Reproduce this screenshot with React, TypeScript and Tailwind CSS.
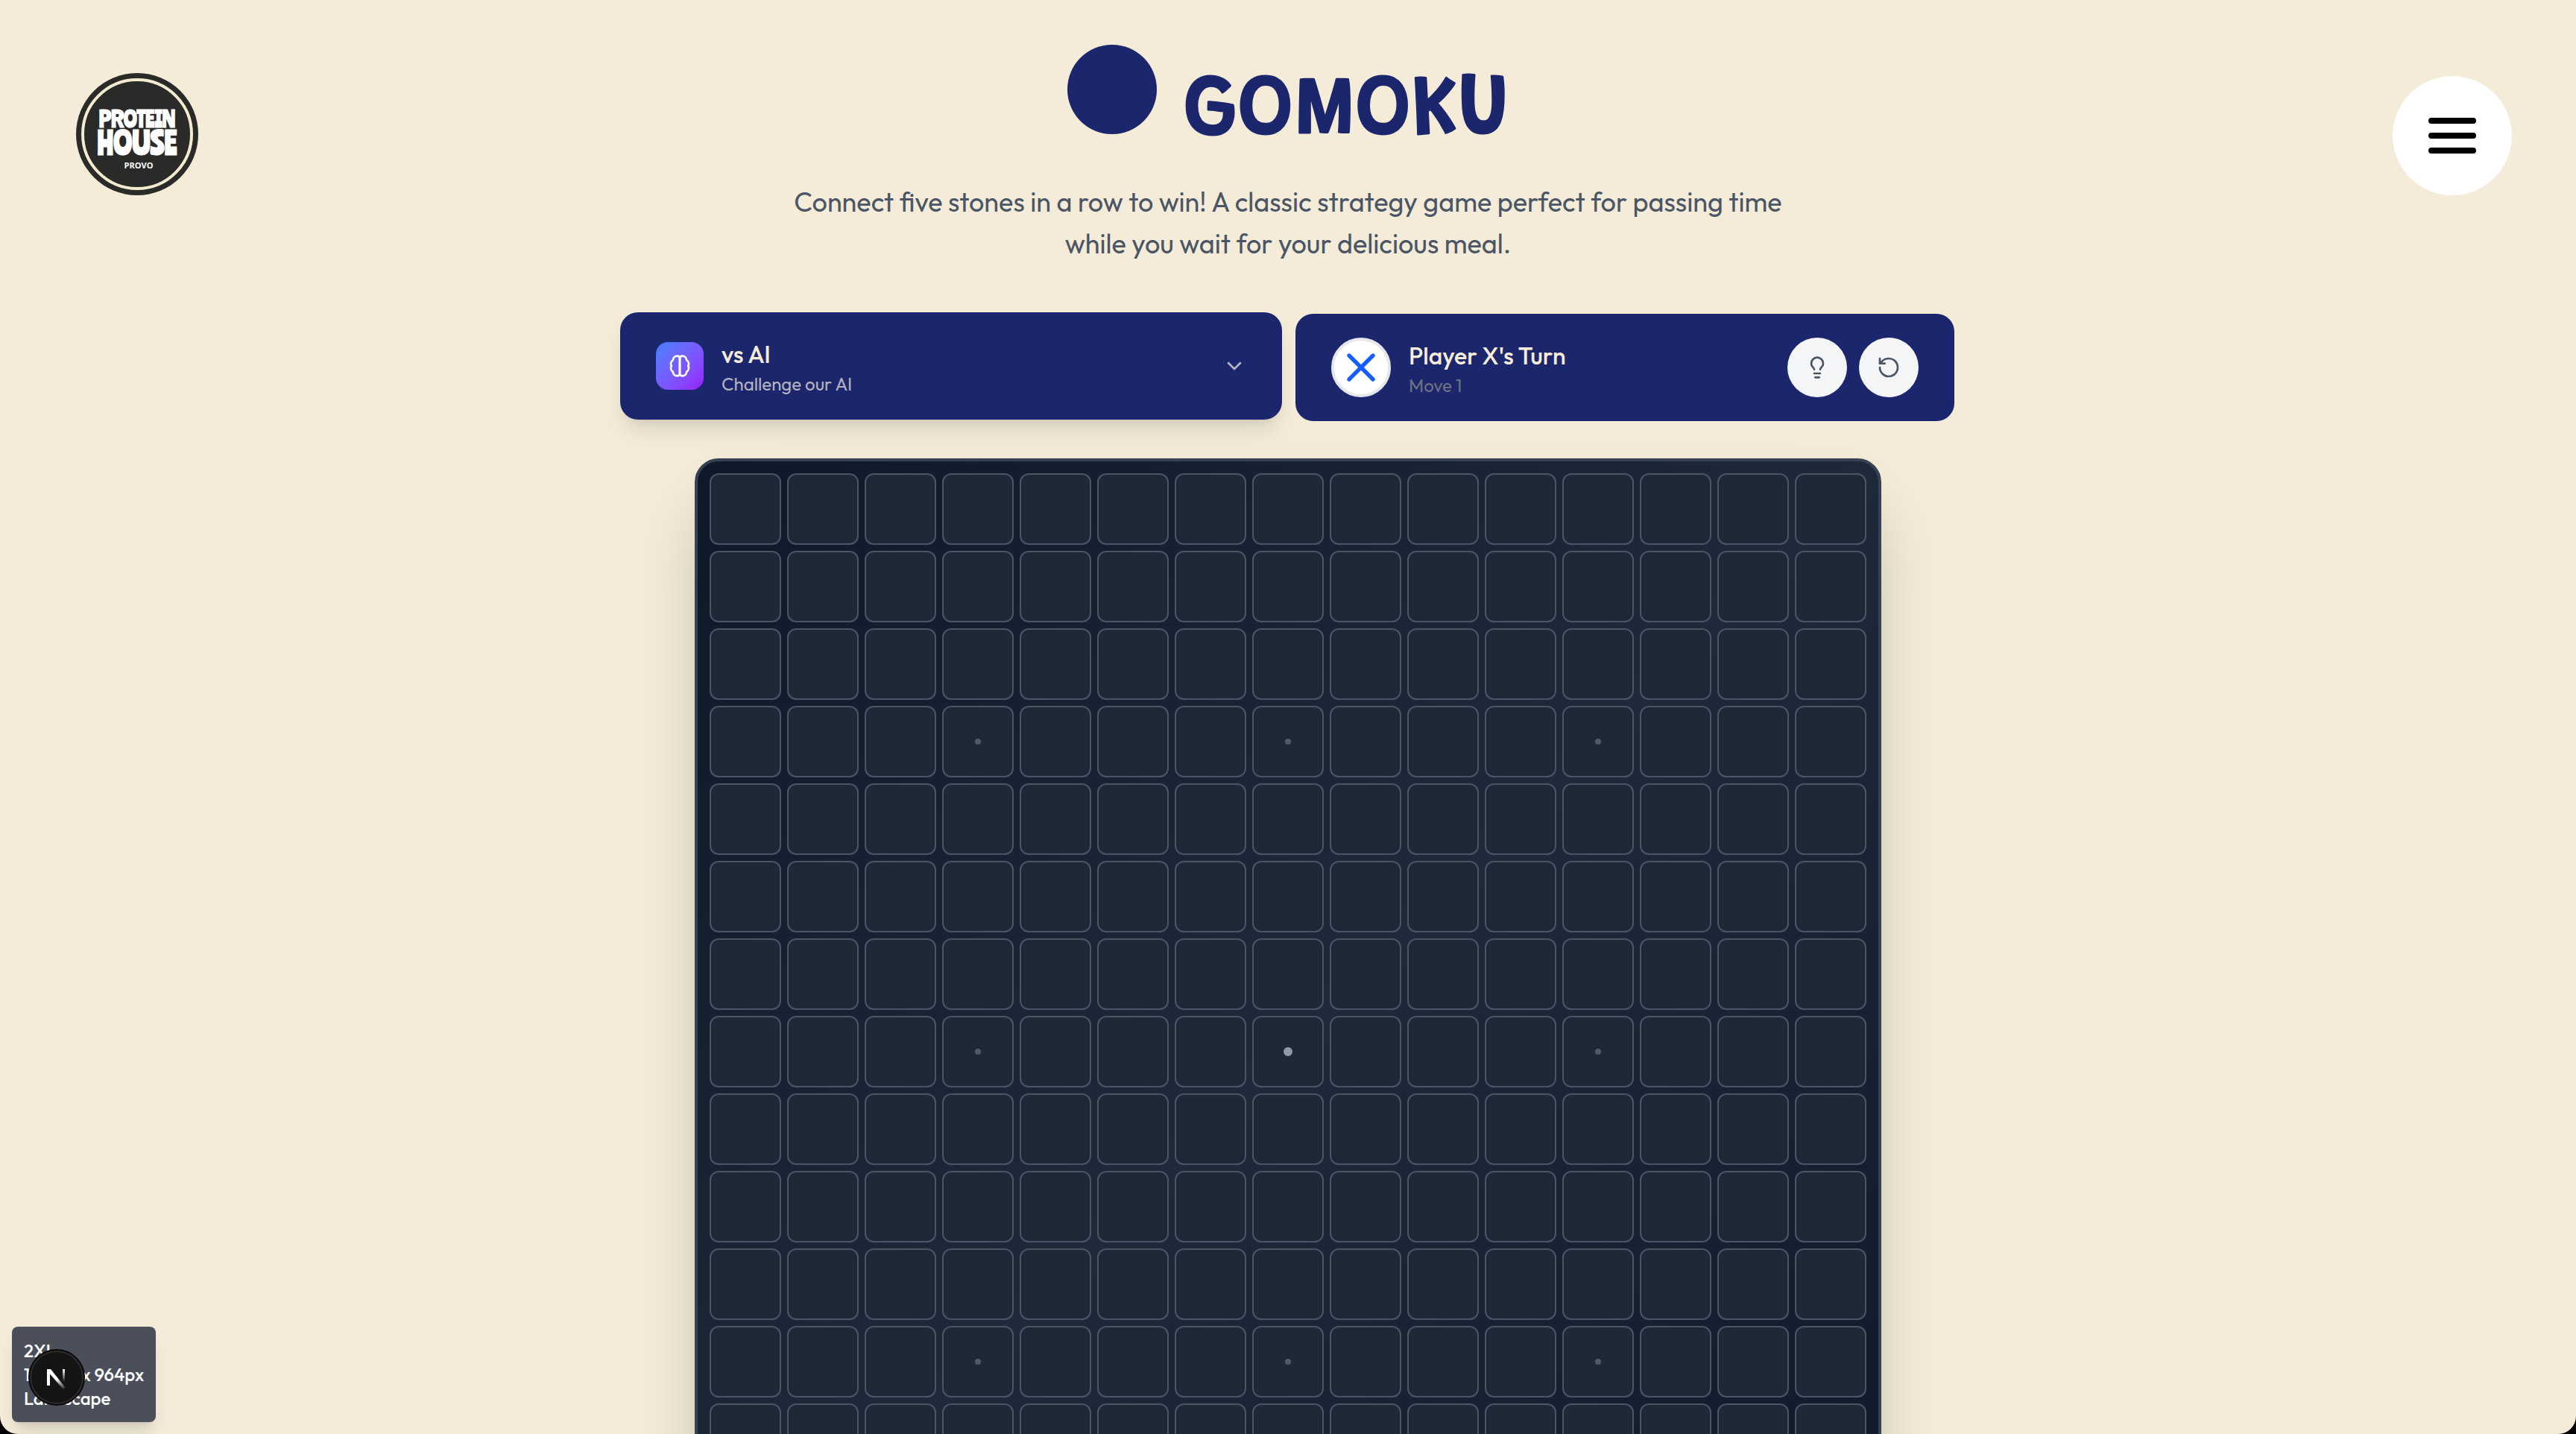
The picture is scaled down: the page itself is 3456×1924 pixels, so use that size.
import React from "react";
import { ChevronDown, Lightbulb, RotateCcw, X } from "lucide-react";

const SIZE = 15;
const STARS = [3, 7, 11];

function ProteinHouseLogo() {
  return (
    <svg viewBox="0 0 164 164" className="size-[164px]" role="img" aria-label="Protein House Provo">
      <circle cx="82" cy="82" r="82" fill="#2a2a29" />
      <circle cx="82" cy="82" r="73" fill="none" stroke="#f3ebd0" strokeWidth="4" />
      <g
        fill="#fff"
        stroke="#fff"
        strokeWidth="1"
        textAnchor="middle"
        fontFamily="'Ranchers', 'DejaVu Sans Condensed', sans-serif"
      >
        <text x="82" y="73" fontSize="29">PROTEIN</text>
        <text x="82" y="110" fontSize="41">HOUSE</text>
      </g>
      <text x="84" y="128" fontSize="11" fontWeight="700" fill="#fff" textAnchor="middle" fontFamily="'Open Sans', sans-serif">
        PROVO
      </text>
    </svg>
  );
}

function BrainIcon() {
  const half = "M12 4.5C12 3 11 2 9.5 2C7 2 5.200 3.700 5.200 6C3 7.500 2.400 10 3.600 12C2.400 14 3 16.500 5.200 18C5.200 20.300 7 22 9.500 22C11 22 12 21 12 19.500Z";
  return (
    <svg viewBox="0 0 24 24" fill="none" stroke="currentColor" strokeWidth="2" strokeLinecap="round" strokeLinejoin="round" className="size-8" aria-hidden="true">
      <path d={half} />
      <path d={half} transform="matrix(-1 0 0 1 24 0)" />
    </svg>
  );
}

function Title() {
  return (
    <h1 className="flex items-center justify-center gap-8">
      <span className="size-[120px] rounded-full bg-[#1c266c]" />
      <svg viewBox="0 0 440 120" className="h-[120px] w-[440px] overflow-visible" role="img" aria-label="Gomoku">
        <text
          x="4"
          y="118"
          fontSize="113"
          fontWeight="500"
          fontFamily="'Grandstander', 'DejaVu Sans Condensed', sans-serif"
          fill="#1c266c"
          stroke="#1c266c"
          strokeWidth="3"
          strokeLinejoin="round"
        >
          GOMOKU
        </text>
      </svg>
    </h1>
  );
}

function ModeSelector() {
  return (
    <button
      type="button"
      aria-haspopup="listbox"
      className="flex h-36 items-center gap-6 rounded-3xl bg-[#1c266c] px-12 text-left shadow-[0_20px_30px_-6px_rgb(0_0_0/0.1),0_8px_12px_-8px_rgb(0_0_0/0.1)]"
    >
      <span className="flex size-16 items-center justify-center rounded-2xl bg-linear-to-br from-[#3f80ff] to-[#9518fb] text-white">
        <BrainIcon />
      </span>
      <span className="flex flex-1 flex-col">
        <span className="text-[32px] leading-12 font-medium text-[#f5ecd9]">vs AI</span>
        <span className="text-2xl leading-8 text-[#b2b3bf]">Challenge our AI</span>
      </span>
      <ChevronDown className="size-8 text-[#b2b3bf]" aria-hidden="true" />
    </button>
  );
}

function TurnPanel() {
  return (
    <section className="p-[2px]">
      <div className="flex h-36 items-center gap-6 rounded-3xl bg-[#1c266c] px-12">
        <span className="flex size-20 items-center justify-center rounded-full border-4 border-gray-200 bg-white text-[#155dfc]">
          <X className="size-16 shrink-0" aria-hidden="true" />
        </span>
        <div className="flex-1">
          <h2 className="text-[32px] leading-12 font-medium text-[#f5ecd9]">Player X's Turn</h2>
          <p className="text-2xl leading-8 text-[#6a7282]">Move 1</p>
        </div>
        <div className="flex gap-4 text-[#4a5565]">
          <button type="button" aria-label="Hint" className="flex size-20 items-center justify-center rounded-full bg-[#f3f5f7]">
            <Lightbulb className="size-8" />
          </button>
          <button type="button" aria-label="Restart" className="flex size-20 items-center justify-center rounded-full bg-[#f3f5f7]">
            <RotateCcw className="size-8" />
          </button>
        </div>
      </div>
    </section>
  );
}

function Board() {
  const cells = Array.from({ length: SIZE * SIZE }, (_, i) => ({ row: Math.floor(i / SIZE), col: i % SIZE }));
  return (
    <div className="mx-auto mt-12 grid w-full max-w-[1592px] grid-cols-[repeat(15,minmax(0,1fr))] gap-2 rounded-4xl border-4 border-[#364153] bg-linear-to-br from-[#0f1828] via-[#1e2939] to-[#0f1828] bg-origin-border p-4 shadow-[0_50px_100px_-24px_rgb(0_0_0/0.25)]">
      {cells.map(({ row, col }) => {
        const star = STARS.includes(row) && STARS.includes(col);
        const center = row === 7 && col === 7;
        return (
          <button
            key={`${row}-${col}`}
            type="button"
            aria-label={`Row ${row + 1}, column ${col + 1}`}
            className="flex aspect-square items-center justify-center rounded-xl border-2 border-[#4a5565] bg-[#1e2938]"
          >
            {center ? (
              <span className="size-3 rounded-full bg-[#8f99a8]" />
            ) : star ? (
              <span className="size-2 rounded-full bg-[#4f5a69]" />
            ) : null}
          </button>
        );
      })}
    </div>
  );
}

function NextBadge() {
  return (
    <button
      type="button"
      aria-label="Open Next.js Dev Tools"
      className="absolute bottom-[38px] left-[38px] flex size-[76px] items-center justify-center rounded-full border-2 border-[#0a0a0a] bg-[#141414] inset-ring-2 inset-ring-[#2e2e2e]"
    >
      <svg viewBox="0 0 76 76" className="size-[76px] shrink-0" fill="none" aria-hidden="true">
        <defs>
          <linearGradient id="stem" x1="0" y1="27" x2="0" y2="44" gradientUnits="userSpaceOnUse">
            <stop stopColor="#fff" />
            <stop offset="1" stopColor="#fff" stopOpacity="0" />
          </linearGradient>
          <linearGradient id="diagonal" x1="38" y1="40" x2="50" y2="54" gradientUnits="userSpaceOnUse">
            <stop stopColor="#fff" />
            <stop offset="1" stopColor="#fff" stopOpacity="0" />
          </linearGradient>
        </defs>
        <path d="M25 27h4v22h-4z" fill="#fff" />
        <path d="M25 27h5L50 52l-3 2L25 29z" fill="url(#diagonal)" />
        <path d="M46 27h3v18h-3z" fill="url(#stem)" />
      </svg>
    </button>
  );
}

export default function App() {
  return (
    <div className="h-screen bg-black font-['Outfit','Lato',sans-serif]">
      <div className="relative h-full overflow-hidden rounded-b-3xl bg-[#f4ebd8]">
        <nav className="absolute inset-x-0 top-[98px] flex items-center justify-between pr-[86px] pl-[102px]">
          <a href="#home">
            <ProteinHouseLogo />
          </a>
          <button type="button" aria-label="Open menu" className="mt-1 flex size-40 flex-col items-center justify-center gap-3 rounded-full bg-white">
            <span className="h-2 w-16 rounded-full bg-black" />
            <span className="h-2 w-16 rounded-full bg-black" />
            <span className="h-2 w-16 rounded-full bg-black" />
          </button>
        </nav>
        <main className="h-full overflow-y-auto pt-[60px] pb-16 [scrollbar-width:none]">
          <Title />
          <p className="mx-auto mt-[63px] max-w-[1344px] text-center text-4xl leading-14 text-[#4a5565]">
            Connect five stones in a row to win! A classic strategy game perfect for passing time while you wait for your
            delicious meal.
          </p>
          <div className="mx-auto mt-16 grid max-w-[1792px] grid-cols-2 items-start gap-4">
            <ModeSelector />
            <TurnPanel />
          </div>
          <Board />
        </main>
        <aside className="absolute bottom-4 left-4 rounded-lg bg-[#4b4f5a] p-4 text-2xl leading-8 font-medium text-white shadow-xl">
          <p>2XL</p>
          <p>1728px x 964px</p>
          <p>Landscape</p>
        </aside>
        <NextBadge />
      </div>
    </div>
  );
}
